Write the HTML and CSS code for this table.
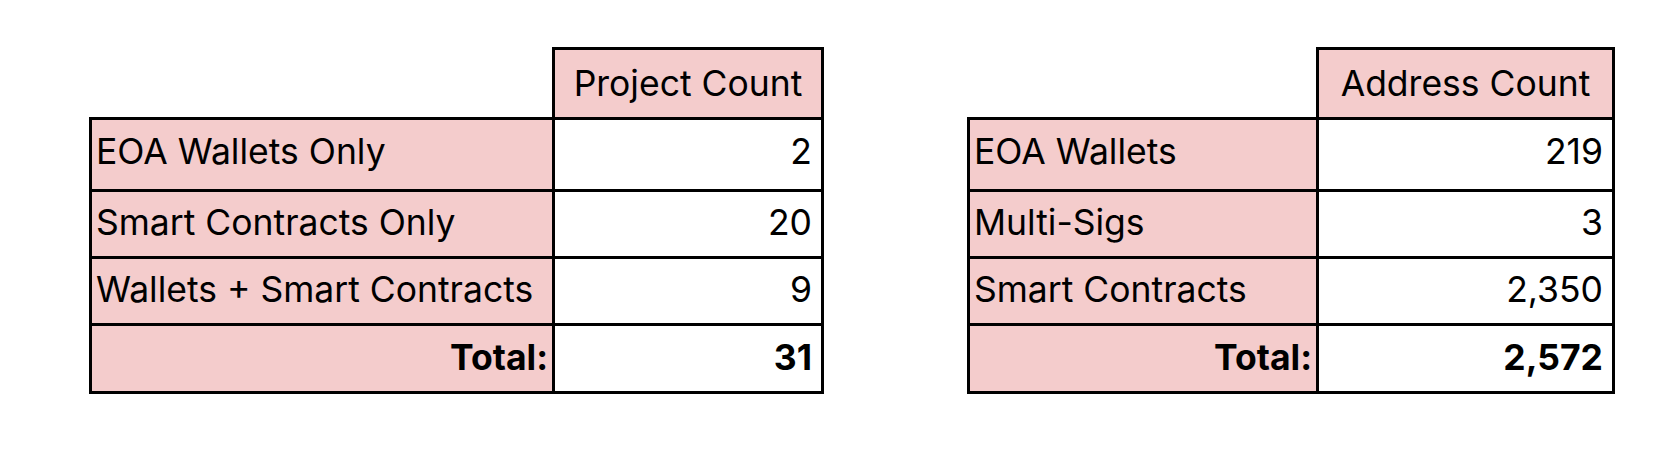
FILE: index.html
```html
<!DOCTYPE html>
<html lang="en">
<head>
<meta charset="utf-8">
<title>Counts</title>
<link rel="stylesheet" href="styles.css">
</head>
<body>
<div class="wrap">
  <table class="grid grid-projects">
    <colgroup><col class="c-label"><col class="c-value"></colgroup>
    <tr class="head"><td class="blank"></td><th>Project Count</th></tr>
    <tr class="first"><td class="label">EOA Wallets Only</td><td class="num">2</td></tr>
    <tr><td class="label">Smart Contracts Only</td><td class="num">20</td></tr>
    <tr><td class="label">Wallets + Smart Contracts</td><td class="num">9</td></tr>
    <tr class="total"><td class="label">Total:</td><td class="num">31</td></tr>
  </table>
  <table class="grid grid-addresses">
    <colgroup><col class="c-label"><col class="c-value"></colgroup>
    <tr class="head"><td class="blank"></td><th>Address Count</th></tr>
    <tr class="first"><td class="label">EOA Wallets</td><td class="num">219</td></tr>
    <tr><td class="label">Multi-Sigs</td><td class="num">3</td></tr>
    <tr><td class="label">Smart Contracts</td><td class="num">2,350</td></tr>
    <tr class="total"><td class="label">Total:</td><td class="num">2,572</td></tr>
  </table>
</div>
</body>
</html>
```

FILE: styles.css
```css
html, body {
  margin: 0;
  padding: 0;
  background: #ffffff;
}
body {
  font-family: Inter, "Noto Sans", sans-serif;
  color: #000;
}
.wrap {
  display: flex;
  align-items: flex-start;
  gap: 143px;
  padding: 47px 0 0 89px;
}
.grid {
  border-collapse: collapse;
  table-layout: fixed;
  font-size: 35.5px;
}
.grid-projects { width: 732px; }
.grid-projects .c-label { width: 463px; }
.grid-projects .c-value { width: 269px; }
.grid-addresses { width: 645px; }
.grid-addresses .c-label { width: 349px; }
.grid-addresses .c-value { width: 296px; }

.grid td, .grid th {
  border: 3px solid #000;
  padding: 0 6px 2px;
  height: 62px;
  line-height: 1;
  white-space: nowrap;
}
.grid tr.head th { height: 67px; padding-bottom: 0; }
.grid tr.first td { height: 64px; padding-bottom: 5px; }
.grid tr.total td { height: 63px; }
.grid th {
  background: #f4cccc;
  font-weight: 400;
  text-align: center;
}
.grid td.blank {
  border: none;
  background: transparent;
}
.grid td.label {
  background: #f4cccc;
  text-align: left;
  padding-left: 4px;
}
.grid td.num {
  background: #fff;
  text-align: right;
  padding-right: 9px;
}
.grid tr.total td {
  font-weight: 700;
  text-align: right;
}
.grid tr.total td.label { padding-right: 4px; }
```
